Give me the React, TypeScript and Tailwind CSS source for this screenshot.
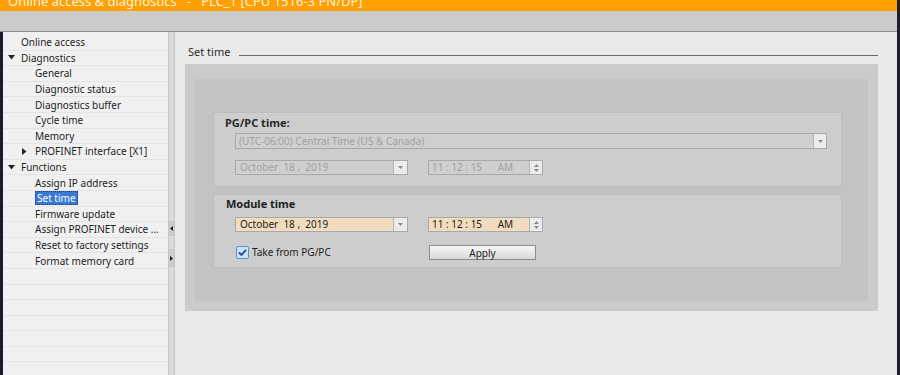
import React from "react";

const font = { fontFamily: '"Noto Sans", "Open Sans", sans-serif' };

type NavItem = { label: string; level: 0 | 1; arrow?: "down" | "right"; selected?: boolean };

const nav: NavItem[] = [
  { label: "Online access", level: 0 },
  { label: "Diagnostics", level: 0, arrow: "down" },
  { label: "General", level: 1 },
  { label: "Diagnostic status", level: 1 },
  { label: "Diagnostics buffer", level: 1 },
  { label: "Cycle time", level: 1 },
  { label: "Memory", level: 1 },
  { label: "PROFINET interface [X1]", level: 1, arrow: "right" },
  { label: "Functions", level: 0, arrow: "down" },
  { label: "Assign IP address", level: 1 },
  { label: "Set time", level: 1, selected: true },
  { label: "Firmware update", level: 1 },
  { label: "Assign PROFINET device ...", level: 1 },
  { label: "Reset to factory settings", level: 1 },
  { label: "Format memory card", level: 1 },
];

function Arrow({ dir }: { dir: "down" | "right" }) {
  return dir === "down" ? (
    <svg width="7" height="5" viewBox="0 0 7 5" className="shrink-0">
      <path d="M0 0h7L3.5 4.5z" fill="#222" />
    </svg>
  ) : (
    <svg width="5" height="7" viewBox="0 0 5 7" className="shrink-0">
      <path d="M0 0v7l4.5-3.5z" fill="#222" />
    </svg>
  );
}

function DateField({ enabled }: { enabled?: boolean }) {
  return (
    <div className={`flex h-[15px] w-[173px] border border-[#a9a9a9] ${enabled ? "bg-[#f1dcc0]" : "bg-[#cfcfcf]"}`}>
      <div className={`flex-1 pl-[4px] text-[10px] leading-[13px] whitespace-pre ${enabled ? "text-[#1c1c1c]" : "text-[#a2a2a2]"}`}>
        {"October  18 ,  2019"}
      </div>
      <div className="flex w-[14px] items-center justify-center border-l border-[#b4b4b4] bg-[#ececec]">
        <svg width="5" height="3" viewBox="0 0 5 3">
          <path d="M0 0h5L2.5 3z" fill="#8a8a8a" />
        </svg>
      </div>
    </div>
  );
}

function TimeField({ enabled }: { enabled?: boolean }) {
  return (
    <div className={`ml-[20px] flex h-[15px] w-[115px] border border-[#a9a9a9] ${enabled ? "bg-[#f1dcc0]" : "bg-[#cfcfcf]"}`}>
      <div className={`flex-1 pl-[3px] text-[10px] leading-[13px] whitespace-pre ${enabled ? "text-[#1c1c1c]" : "text-[#a2a2a2]"}`}>
        {"11 : 12 : 15      AM"}
      </div>
      <div className="flex w-[13px] flex-col items-center justify-center gap-[2px] border-l border-[#b4b4b4] bg-[#ececec]">
        <svg width="5" height="3" viewBox="0 0 5 3">
          <path d="M0 3h5L2.5 0z" fill="#8a8a8a" />
        </svg>
        <svg width="5" height="3" viewBox="0 0 5 3">
          <path d="M0 0h5L2.5 3z" fill="#8a8a8a" />
        </svg>
      </div>
    </div>
  );
}

export default function App() {
  return (
    <div style={font} className="flex h-[375px] w-[900px] flex-col overflow-hidden border-r-[3px] border-[#1f1f2b] bg-[#e9e9e9]">
      {/* title bar, text cut off at the top */}
      <div className="h-[11px] shrink-0 overflow-hidden bg-[#ff9f00] pl-[8px]">
        <div className="-mt-[7px] text-[13px] leading-[16px] whitespace-pre text-[#fff3df]">
          {"Online access & diagnostics   -   PLC_1 [CPU 1516-3 PN/DP]"}
        </div>
      </div>
      <div className="h-[21px] shrink-0 border-b border-[#8f8f8f] bg-[#cbcbcb]" />

      <div className="flex min-h-0 flex-1">
        <div className="w-[3px] bg-[#1c1c28]" />

        {/* navigation tree */}
        <div className="w-[165px] overflow-hidden bg-[#f0f0f0] pt-[3px]">
          {nav.map((item) => (
            <div
              key={item.label}
              className={`flex h-[15.6px] items-center border-b border-[#e4e4e4] text-[10px] text-[#1e1e1e] ${item.level === 0 ? "pl-[5px]" : "pl-[19px]"}`}
            >
              <div className="flex w-[13px] items-center">{item.arrow && <Arrow dir={item.arrow} />}</div>
              <span
                className={`leading-[12px] whitespace-nowrap ${item.selected ? "border border-dotted border-[#1a3c80] bg-[#3a78d8] px-px text-white" : ""}`}
              >
                {item.label}
              </span>
            </div>
          ))}
          {Array.from({ length: 7 }).map((_, i) => (
            <div key={i} className="h-[15.6px] border-b border-[#e4e4e4]" />
          ))}
        </div>

        {/* splitter */}
        <div className="flex w-[7px] flex-col border-x border-[#c6c6c6] bg-[#dadada] pt-[2px]">
          <div className="h-[188px] border-b border-[#c6c6c6]" />
          <div className="flex h-[14px] items-center justify-center border-b border-[#c6c6c6] bg-[#cdcdcd]">
            <svg width="3" height="5" viewBox="0 0 3 5">
              <path d="M3 0v5L0 2.5z" fill="#222" />
            </svg>
          </div>
          <div className="h-[14px] border-b border-[#c6c6c6]" />
          <div className="flex h-[17px] items-center justify-center border-b border-[#c6c6c6] bg-[#cdcdcd]">
            <svg width="3" height="5" viewBox="0 0 3 5">
              <path d="M0 0v5l3-2.5z" fill="#222" />
            </svg>
          </div>
        </div>

        {/* content */}
        <div className="flex flex-1 flex-col pl-[10px] pr-[19px] pt-[12px]">
          <div className="flex h-[16px] items-center">
            <span className="pl-[3px] text-[11px] text-[#2a2a2a]">Set time</span>
            <div className="ml-[9px] mt-[6px] flex-1 border-b border-[#6c6c6c]" />
          </div>

          <div className="mt-[4px] flex h-[247px] flex-col bg-[#cbcbcb] px-[10px] pb-[10px] pt-[15px]">
            <div className="flex flex-1 flex-col bg-[#c3c3c3] pl-[18px] pr-[26px] pt-[33px]">
              {/* PG/PC time */}
              <div className="h-[75px] border border-[#bdbdbd] bg-[#cdcdcd] pl-[11px] pr-[14px] pt-[3px]">
                <div className="h-[14px] text-[11px] font-bold leading-[14px] text-[#2a2a2a]">PG/PC time:</div>
                <div className="ml-[10px] mt-[3px] flex h-[16px] border border-[#a9a9a9] bg-[#cfcfcf]">
                  <div className="flex-1 pl-[3px] text-[10px] leading-[14px] text-[#a2a2a2]">
                    (UTC-06:00) Central Time (US &amp; Canada)
                  </div>
                  <div className="flex w-[13px] items-center justify-center border-l border-[#b4b4b4] bg-[#ececec]">
                    <svg width="5" height="3" viewBox="0 0 5 3">
                      <path d="M0 0h5L2.5 3z" fill="#8a8a8a" />
                    </svg>
                  </div>
                </div>
                <div className="ml-[10px] mt-[11px] flex">
                  <DateField />
                  <TimeField />
                </div>
              </div>

              {/* Module time */}
              <div className="mt-[7px] h-[74px] border border-[#bdbdbd] bg-[#cdcdcd] pl-[12px] pr-[14px] pt-[2px]">
                <div className="h-[14px] text-[11px] font-bold leading-[14px] text-[#1e1e1e]">Module time</div>
                <div className="ml-[9px] mt-[6px] flex">
                  <DateField enabled />
                  <TimeField enabled />
                </div>
                <div className="ml-[10px] mt-[13px] flex h-[15px] items-center">
                  <svg width="13" height="13" viewBox="0 0 13 13" className="shrink-0">
                    <rect x="0.5" y="0.5" width="12" height="12" rx="1.5" fill="#cfe2f6" stroke="#5b8fcf" />
                    <path d="M3 6.5l2.5 2.5L10 3.8" fill="none" stroke="#1d4c99" strokeWidth="1.8" />
                  </svg>
                  <span className="ml-[3px] w-[177px] text-[10px] text-[#1e1e1e]">Take from PG/PC</span>
                  <button className="h-[15px] w-[107px] border border-[#8d8d8d] bg-gradient-to-b from-[#f7f7f7] to-[#d8d8d8] text-[10px] leading-[12px] text-[#1e1e1e]">
                    Apply
                  </button>
                </div>
              </div>
            </div>
          </div>
        </div>
      </div>
    </div>
  );
}
